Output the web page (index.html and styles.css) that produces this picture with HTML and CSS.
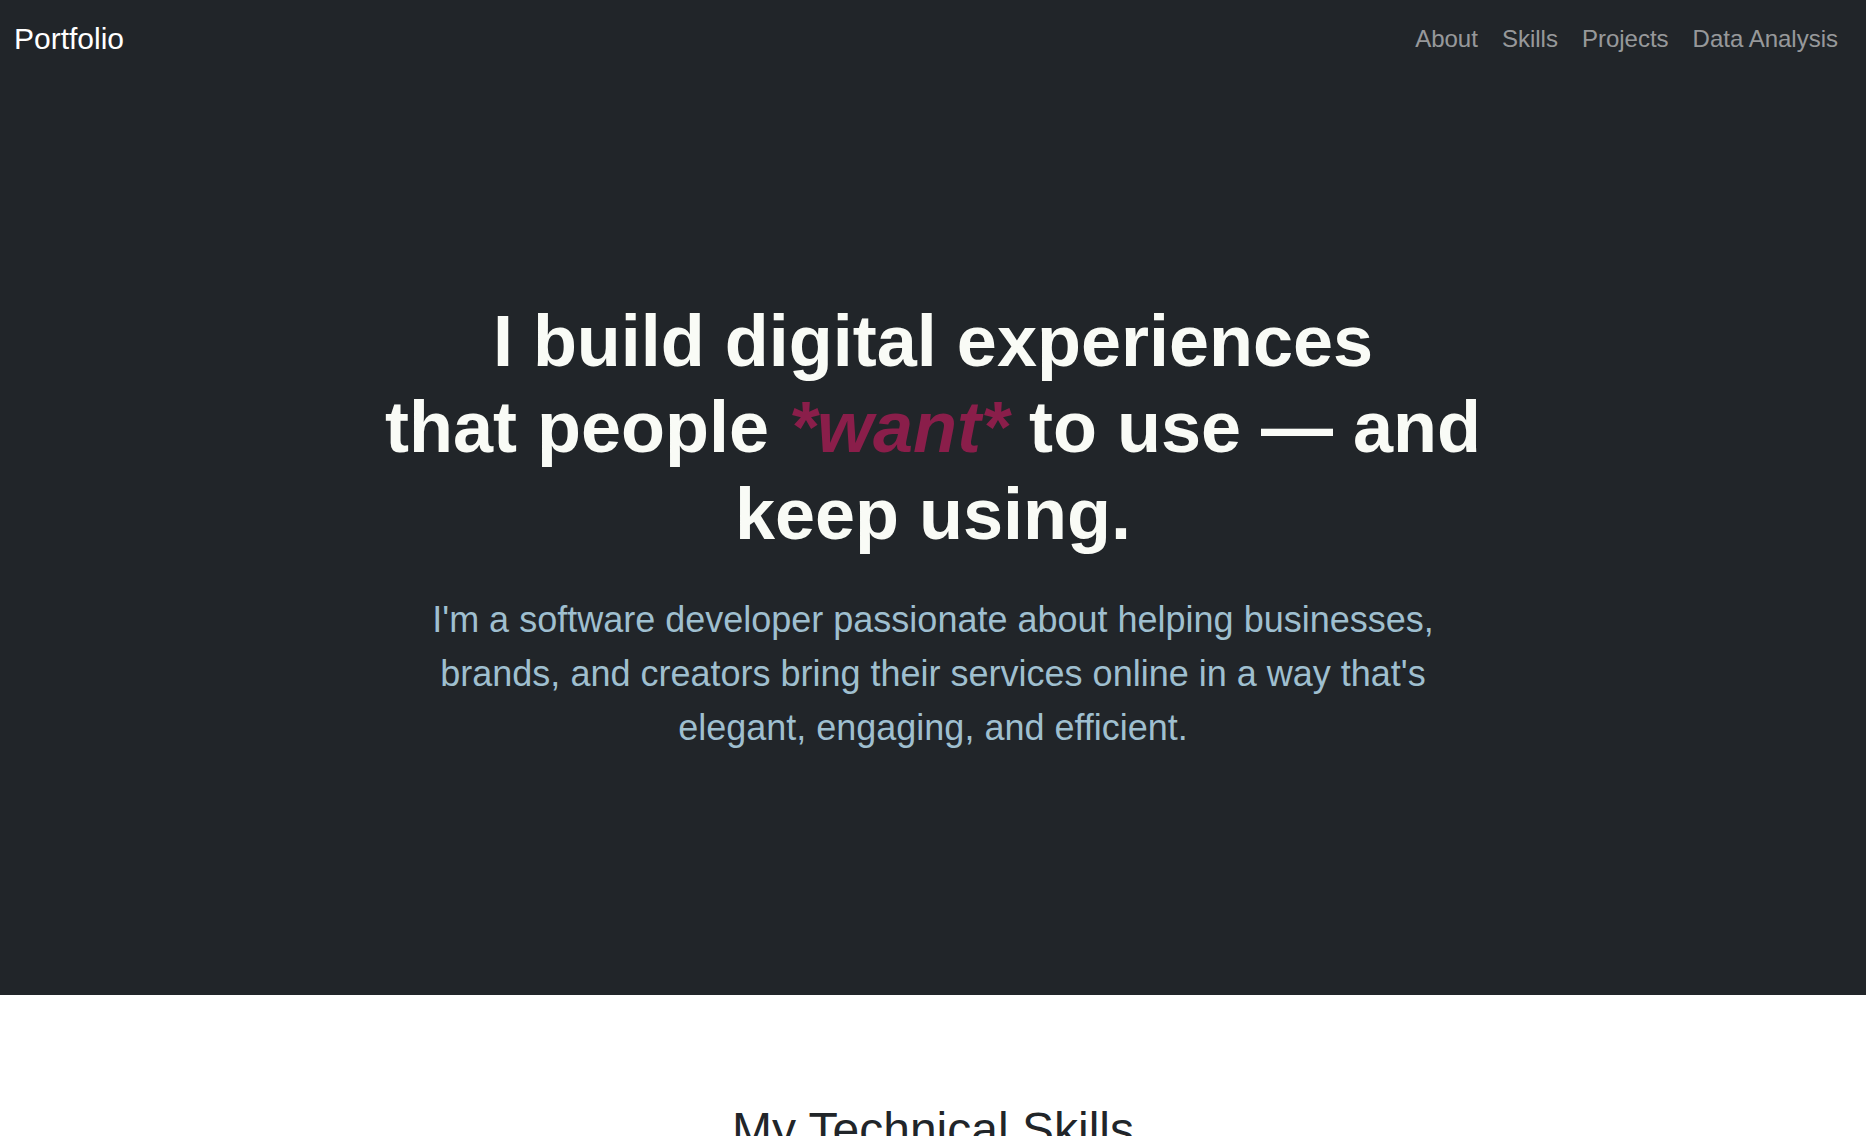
FILE: index.html
```html
<!DOCTYPE html>
<html lang="en">
<head>
<meta charset="utf-8">
<title>Portfolio</title>
<link rel="stylesheet" href="styles.css">
</head>
<body>
<nav class="navbar">
  <a class="brand" href="#">Portfolio</a>
  <ul class="nav-links">
    <li><a href="#about">About</a></li>
    <li><a href="#skills">Skills</a></li>
    <li><a href="#projects">Projects</a></li>
    <li><a href="#data">Data Analysis</a></li>
  </ul>
</nav>
<header class="hero">
  <div class="hero-inner">
    <h1 class="hero-title">I build digital experiences<br>that people <em class="accent">*want*</em> to use — and keep using.</h1>
    <p class="hero-lead">I'm a software developer passionate about helping businesses, brands, and creators bring their services online in a way that's elegant, engaging, and efficient.</p>
  </div>
</header>
<section class="skills" id="skills">
  <h2 class="section-title">My Technical Skills</h2>
</section>
</body>
</html>
```
FILE: styles.css
```css
* { box-sizing: border-box; }
html, body { margin: 0; padding: 0; }
body {
  font-family: "Liberation Sans", Arial, sans-serif;
  background: #ffffff;
  color: #212529;
}
.navbar {
  background: #212529;
  display: flex;
  align-items: center;
  justify-content: space-between;
  height: 84px;
  padding: 0 16px 7px 14px;
}
.brand {
  color: #ffffff;
  font-size: 30px;
  text-decoration: none;
  line-height: 45px;
}
.nav-links {
  list-style: none;
  display: flex;
  margin: 0;
  padding: 0;
}
.nav-links a {
  display: block;
  color: rgba(255,255,255,0.55);
  text-decoration: none;
  font-size: 24px;
  line-height: 36px;
  padding: 0 12px;
}
.hero {
  background: #212529;
  padding: 214px 0 216px;
}
.hero-inner {
  max-width: 1116px;
  margin: 0 auto;
  text-align: center;
}
.hero-title {
  margin: 0 0 36px;
  font-size: 72px;
  line-height: 1.2;
  font-weight: 700;
  color: #f9fbf6;
}
.accent {
  color: #8a1e4a;
  font-style: italic;
}
.hero-lead {
  margin: 0 0 24px;
  font-size: 36px;
  line-height: 1.5;
  color: #9fbfcf;
}
.skills {
  padding-top: 106px;
  text-align: center;
}
.section-title {
  margin: 0;
  font-size: 48px;
  line-height: 1.2;
  font-weight: 400;
  color: #212529;
}
```
